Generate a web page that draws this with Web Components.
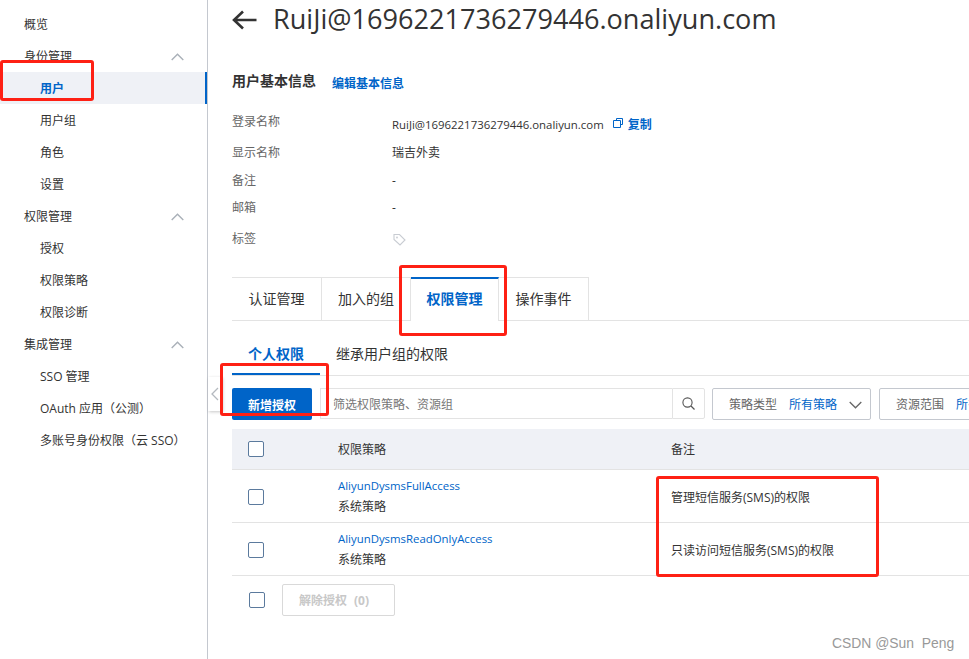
<!doctype html>
<html lang="zh"><head><meta charset="utf-8"><title>用户详情</title>
<style>
html,body{margin:0;padding:0;background:#fff}
body{width:969px;height:659px;overflow:hidden;position:relative;font:12px/18px "Open Sans","Noto Sans CJK SC",sans-serif;color:#333}
</style></head><body>
<ram-page>
  <ram-sidebar slot="side">
    <ram-nav>概览</ram-nav>
    <ram-nav group>身份管理</ram-nav>
    <ram-nav sub active>用户</ram-nav>
    <ram-nav sub>用户组</ram-nav>
    <ram-nav sub>角色</ram-nav>
    <ram-nav sub>设置</ram-nav>
    <ram-nav group>权限管理</ram-nav>
    <ram-nav sub>授权</ram-nav>
    <ram-nav sub>权限策略</ram-nav>
    <ram-nav sub>权限诊断</ram-nav>
    <ram-nav group>集成管理</ram-nav>
    <ram-nav sub>SSO 管理</ram-nav>
    <ram-nav sub>OAuth 应用（公测）</ram-nav>
    <ram-nav sub>多账号身份权限（云 SSO）</ram-nav>
  </ram-sidebar>
  <ram-title>RuiJi@1696221736279446.onaliyun.com</ram-title>
  <ram-info></ram-info>
  <ram-tabs></ram-tabs>
  <ram-subtabs></ram-subtabs>
  <ram-toolbar></ram-toolbar>
  <ram-table></ram-table>
</ram-page>
<ram-mark style="left:0;top:60px;width:94px;height:41px"></ram-mark>
<ram-mark style="left:399px;top:265px;width:108px;height:71px"></ram-mark>
<ram-mark style="left:220px;top:363px;width:109px;height:53px"></ram-mark>
<ram-mark style="left:656px;top:476px;width:223px;height:101px"></ram-mark>
<ram-watermark>CSDN @Sun&nbsp; Peng</ram-watermark>
<script>
function def(name,css,html){
  customElements.define(name,class extends HTMLElement{
    constructor(){super();const r=this.attachShadow({mode:'open'});r.innerHTML='<style>'+css+'</style>'+(typeof html==='function'?html(this):html);}
  });
}
def('ram-page',`:host{display:flex;width:969px;height:659px;overflow:hidden}
 .main{flex:1;min-width:0;padding-left:24px;display:flex;flex-direction:column;position:relative}
 .handle{position:absolute;left:0;top:377px;width:14px;height:34px;background:#fff;box-shadow:1px 1px 3px rgba(0,0,0,.22);display:flex;align-items:center;justify-content:center}`,
 `<slot name="side"></slot><div class="main"><slot></slot><div class="handle"><svg width="8" height="14" viewBox="0 0 8 14"><path d="M7 1 1 7l6 6" fill="none" stroke="#b4b9bf" stroke-width="1.3"/></svg></div></div>`);
def('ram-sidebar',`:host{display:flex;flex-direction:column;width:207px;flex:none;border-right:1px solid #c4c8cf;padding-top:8px;font-size:12px;color:#333}`,`<slot></slot>`);
def('ram-nav',`:host{display:flex;align-items:center;height:32px;box-sizing:border-box;padding:2px 0 0 24px;position:relative;white-space:nowrap;color:#333}
 :host([sub]){padding-left:40px}
 :host([active]){background:#eff1f6;color:#0064c8;font-weight:700}
 :host([active])::after{content:"";position:absolute;right:0;top:0;bottom:0;width:2px;background:#0064c8}
 svg{position:absolute;left:171px;top:13px}`,
 el=>`<slot></slot>`+(el.hasAttribute('group')?`<svg width="13" height="8" viewBox="0 0 13 8"><path d="M.7 7 6.500 1.200 12.300 7" fill="none" stroke="#a9b0b8" stroke-width="1.400"/></svg>`:''));
def('ram-title',`:host{display:flex;align-items:center;height:40px;color:#333;font-size:27.1px;line-height:38px;white-space:nowrap}
 svg{margin-right:16px;flex:none}
 .tx{padding-bottom:2px}`,
 `<svg width="25" height="20" viewBox="0 0 25 20"><path d="M24.500 10H2M11 1.500 2 10l9 8.500" fill="none" stroke="#333" stroke-width="2.600"/></svg><div class="tx"><slot></slot></div>`);
def('ram-info',`:host{display:block;padding-top:27px}
 .head{display:flex;align-items:center;height:28px}
 h3{margin:0;font-size:14px;font-weight:700;color:#333;width:100px}
 a{color:#0064c8;font-weight:700;font-size:12px;padding-top:5px}
 .rows{display:grid;grid-template-columns:160px 1fr;margin-top:15px;color:#666}
 .rows>div{display:flex;align-items:center}
 .v{color:#333}
 .m{font-size:11.4px}
 .c{color:#0064c8;font-weight:700;margin-left:5px}
 .cp{margin-left:9px;margin-top:-5px}
 .g{color:#666}`,
 `<div class="head"><h3>用户基本信息</h3><a>编辑基本信息</a></div>
 <div class="rows" style="grid-template-rows:30px 26px 30px 24px 38px">
 <div class="g" style="padding-bottom:6px">登录名称</div><div class="v"><span class="m">RuiJi@1696221736279446.onaliyun.com</span><svg class="cp" width="10" height="10" viewBox="0 0 10 10"><path d="M3.500 2V.5h6v6H8M.5 2.500h7v7h-7z" fill="none" stroke="#0064c8"/></svg><span class="c">复制</span></div>
 <div class="g">显示名称</div><div class="v">瑞吉外卖</div>
 <div class="g">备注</div><div class="v">-</div>
 <div class="g">邮箱</div><div class="v">-</div>
 <div class="g">标签</div><div class="v"><svg style="margin-left:1px" width="13" height="13" viewBox="0 0 13 13"><path d="M1 1.500h5.500l5.500 5.500-5 5-6-5.500z" fill="none" stroke="#c8ccd2" stroke-width="1.100"/><circle cx="4" cy="4.500" r=".9" fill="#c8ccd2"/></svg></div>
 </div>`);
def('ram-tabs',`:host{display:flex;height:44px;margin-top:19px;box-sizing:border-box;border-bottom:1px solid #e3e3e3;font-size:14px;color:#333;position:relative}
 .t{box-sizing:border-box;height:44px;display:flex;align-items:center;justify-content:center;border:1px solid #e3e3e3;border-left:0;border-bottom:0;white-space:nowrap;padding-bottom:2px}
 .t:first-child{border-left:1px solid #e3e3e3}
 .a{border-top:2px solid #0064c8;color:#0064c8;font-weight:700;background:#fff;margin-bottom:-1px;padding-bottom:3px}`,
 `<div class="t" style="width:90px">认证管理</div><div class="t" style="width:89px">加入的组</div><div class="t a" style="width:88px">权限管理</div><div class="t" style="width:90px">操作事件</div>`);
def('ram-subtabs',`:host{display:flex;height:55px;box-sizing:border-box;border-bottom:1px solid #e3e3e3;font-size:14px;color:#333}
 .s{height:54px;display:flex;align-items:center;justify-content:center;box-sizing:border-box;padding-top:14px;white-space:nowrap}
 .a{color:#0064c8;font-weight:700;width:88px;border-bottom:2px solid #0064c8}
 .b{width:144px;padding-bottom:2px}`,
 `<div class="s a">个人权限</div><div class="s b">继承用户组的权限</div>`);
def('ram-toolbar',`:host{display:flex;height:32px;margin-top:12px;font-size:12px;white-space:nowrap;align-items:flex-start}
 .btn{width:80px;height:32px;box-sizing:border-box;padding-top:3px;background:#0064c8;color:#fff;font-weight:700;display:flex;align-items:center;justify-content:center;border-radius:2px;flex:none}
 .inp{margin-left:8px;width:352px;height:31px;box-sizing:border-box;border:1px solid #e3e3e3;border-right:0;color:#777;display:flex;align-items:center;padding:3px 0 0 12px;flex:none}
 .sb{width:33px;height:31px;box-sizing:border-box;border:1px solid #e3e3e3;display:flex;align-items:center;justify-content:center;border-radius:0 2px 2px 0;flex:none}
 .sel{margin-left:7px;height:32px;box-sizing:border-box;border:1px solid #c4c8cf;border-radius:2px;display:flex;align-items:center;padding:1px 0 0 16px;color:#666;flex:none}
 .sel b{font-weight:400;color:#0064c8;margin-left:12px}
 .sel svg{margin-left:12px}`,
 `<div class="btn">新增授权</div><div class="inp">筛选权限策略、资源组</div><div class="sb"><svg width="13" height="13" viewBox="0 0 13 13"><circle cx="5.500" cy="5.500" r="4.600" fill="none" stroke="#555" stroke-width="1.100"/><path d="m9 9 3.500 3.500" stroke="#555" stroke-width="1.200"/></svg></div>
 <div class="sel" style="width:159px">策略类型<b>所有策略</b><svg width="13" height="8" viewBox="0 0 13 8"><path d="M.7 1 6.500 6.800 12.300 1" fill="none" stroke="#666" stroke-width="1.300"/></svg></div>
 <div class="sel" style="margin-left:8px;width:120px">资源范围<b>所有资源</b></div>`);
def('ram-cb',`:host{display:block;width:16px;height:16px;box-sizing:border-box;border:1px solid #5b7a9d;border-radius:2px;background:#fff;flex:none}`,``);
def('ram-table',`:host{display:block;margin-top:9px;font-size:12px;color:#333}
 .r{display:grid;grid-template-columns:106px 333px 1fr;align-items:center;border-bottom:1px solid #e3e3e3;box-sizing:border-box;height:53px}
 .r>ram-cb{margin-left:16px;margin-top:2px}
 .h{height:41px;background:#eff1f6}
 .h>ram-cb{margin-top:0}
 .h div{padding-top:2px}
 a{display:block;color:#0064c8;font-size:11.4px;line-height:20px}
 .n{line-height:20px;margin-top:1px}
 .d{padding-top:4px}
 .f{display:flex;align-items:center;padding:8px 0 0 17px}
 .x{margin-left:17px;width:113px;height:32px;box-sizing:border-box;border:1px solid #d9d9d9;border-radius:2px;color:#c8c8c8;font-weight:700;display:flex;align-items:center;padding:2px 0 0 16px}
 .x span{margin-left:7px}`,
 `<div class="r h"><ram-cb></ram-cb><div>权限策略</div><div>备注</div></div>
 <div class="r"><ram-cb></ram-cb><div><a>AliyunDysmsFullAccess</a><div class="n">系统策略</div></div><div class="d">管理短信服务(SMS)的权限</div></div>
 <div class="r"><ram-cb></ram-cb><div><a>AliyunDysmsReadOnlyAccess</a><div class="n">系统策略</div></div><div class="d">只读访问短信服务(SMS)的权限</div></div>
 <div class="f"><ram-cb></ram-cb><div class="x">解除授权<span>(0)</span></div></div>`);
def('ram-mark',`:host{position:absolute;display:block;box-sizing:border-box;border:3px solid #fe2014;border-radius:3px;pointer-events:none}`,``);
def('ram-watermark',`:host{position:absolute;left:832px;top:634px;font:13.9px/18px "Liberation Sans",sans-serif;color:#999;white-space:nowrap}`,`<slot></slot>`);
</script>
</body></html>
